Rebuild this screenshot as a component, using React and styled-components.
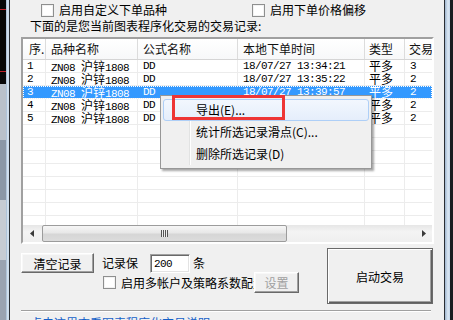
import React from 'react'
import styled, { createGlobalStyle } from 'styled-components'

const uiFont = `"Noto Sans CJK SC", "Liberation Sans", sans-serif`
const monoFont = `"Liberation Mono", "Noto Sans CJK SC", monospace`

const GlobalStyle = createGlobalStyle`
  html, body {
    margin: 0;
    padding: 0;
    background: #0b0b0b;
    overflow: hidden;
  }
  body {
    width: 453px;
    height: 320px;
    font-family: ${uiFont};
    font-size: 12px;
  }
`

const Page = styled.div`
  display: flex;
  width: 453px;
  height: 320px;
`

const LeftBackdrop = styled.div`
  width: 6px;
  background:
    linear-gradient(to bottom, transparent 0 9px, #c0202a 9px 10px, transparent 10px 71px, #c0202a 71px 72px, transparent 72px),
    linear-gradient(to bottom, #080808 0 84px, #b9c1cb 84px 140px, #8b97a6 140px 200px, #c6cbd3 200px 260px, #9aa3b1 260px);
`

const FrameEdge = styled.div`
  box-sizing: border-box;
  background: linear-gradient(to right, #9fb6cf, #dbe7f3 60%, #c4d6e9);
  border-left: ${({ $side }) => ($side === 'right' ? '1px solid #2a2e33' : 'none')};
  border-right: ${({ $side }) => ($side === 'left' ? '1px solid #2a2e33' : 'none')};
  width: ${({ $side }) => ($side === 'right' ? '6px' : '4px')};
`

const RightBackdrop = styled.div`
  width: 3px;
  background: #1a1c20;
`

const Dialog = styled.div`
  position: relative;
  width: 434px;
  box-sizing: border-box;
  padding: 0 10px 0 11px;
  background: #f0f0f0;
  overflow: hidden;
  color: #000;
  display: flex;
  flex-direction: column;
`

const CheckRow = styled.div`
  display: grid;
  grid-template-columns: 231px auto;
  height: 14px;
  margin-top: 3px;
  flex: none;
`

const CheckLabel = styled.label`
  display: flex;
  align-items: center;
  gap: 5px;
  padding-left: ${({ $indent }) => $indent || 0}px;
  line-height: 14px;
  white-space: nowrap;
`

const Box = styled.span`
  width: 13px;
  height: 13px;
  box-sizing: border-box;
  border: 1px solid #8e8f8f;
  background: #fff;
  box-shadow: inset 0 0 0 1px #f2f2f2;
  flex: none;
`

const Caption = styled.div`
  margin-top: 2px;
  height: 14px;
  line-height: 14px;
  padding-left: 9px;
  white-space: nowrap;
  flex: none;
`

const ListView = styled.div`
  margin-top: 4px;
  height: 207px;
  flex: none;
  box-sizing: border-box;
  border: 2px solid;
  border-color: #a0a0a0 #ffffff #ffffff #a0a0a0;
  background: #fff;
  display: flex;
  flex-direction: column;
  overflow: hidden;
`

const HeaderRow = styled.div`
  display: flex;
  height: 21px;
  flex: none;
  box-sizing: border-box;
  border-bottom: 1px solid #d5d5d5;
  background: linear-gradient(to bottom, #ffffff, #f7f8f9);
`

const HeaderCell = styled.div`
  flex: none;
  width: ${({ $w }) => $w}px;
  box-sizing: border-box;
  border-right: 1px solid #dcdcdc;
  padding-left: ${({ $pad }) => $pad}px;
  line-height: 20px;
  white-space: nowrap;
  overflow: hidden;
  color: #111;
`

const Body = styled.div`
  flex: 1;
  min-height: 0;
  overflow: hidden;
`

const Row = styled.div`
  display: flex;
  height: 13px;
  box-sizing: border-box;
  border-bottom: 1px solid #ececec;
  background: ${({ $selected }) => ($selected ? '#3399ff' : 'transparent')};
  color: ${({ $selected }) => ($selected ? '#fff' : '#000')};
  outline: ${({ $selected }) => ($selected ? '1px dotted #ffffff' : 'none')};
  outline-offset: -1px;
`

const Cell = styled.div`
  flex: none;
  width: ${({ $w }) => $w}px;
  height: 12px;
  box-sizing: border-box;
  border-right: 1px solid ${({ $selected }) => ($selected ? '#3399ff' : '#ececec')};
  padding-left: ${({ $pad }) => $pad}px;
  font-family: ${monoFont};
  font-size: 11px;
  letter-spacing: -0.6px;
  line-height: 12px;
  white-space: nowrap;
  overflow-x: clip;
  overflow-y: visible;
`

const Cjk = styled.span`
  font-family: ${uiFont};
  font-size: 12px;
  line-height: 12px;
  letter-spacing: 0;
`

const HScroll = styled.div`
  flex: none;
  height: 17px;
  display: flex;
  align-items: stretch;
  background: linear-gradient(to bottom, #e6e6e6, #f4f4f4 40%, #efefef);
`

const ArrowButton = styled.div`
  width: 17px;
  flex: none;
  display: flex;
  align-items: center;
  justify-content: center;
`

const Track = styled.div`
  flex: 1;
  padding: 0 1px;
  display: flex;
`

const Thumb = styled.div`
  width: 245px;
  margin-left: 1px;
  box-sizing: border-box;
  border: 1px solid #9c9c9c;
  border-radius: 2px;
  background: linear-gradient(to bottom, #f6f6f6, #e8e8e8 45%, #d6d6d6 55%, #dcdcdc);
  display: flex;
  align-items: center;
  justify-content: center;
`

const Grip = styled.div`
  width: 7px;
  height: 7px;
  background: repeating-linear-gradient(to right, #555 0 1px, #eee 1px 2px);
`

const Bottom = styled.div`
  display: flex;
  height: 64px;
  flex: none;
`

const Controls = styled.div`
  flex: 1;
  display: flex;
  flex-direction: column;
`

const ControlRow = styled.div`
  display: flex;
  align-items: center;
  flex: none;
  height: ${({ $h }) => $h}px;
  margin-top: ${({ $top }) => $top}px;
  padding-left: ${({ $indent }) => $indent || 0}px;
`

const Button = styled.button`
  width: ${({ $w }) => $w}px;
  height: ${({ $h }) => $h}px;
  padding: 0;
  box-sizing: border-box;
  font-family: ${uiFont};
  font-size: 12px;
  color: ${({ disabled }) => (disabled ? '#a0a0a0' : '#000')};
  background: #f0f0f0;
  border: 1px solid;
  border-color: #ffffff #696969 #696969 #ffffff;
  box-shadow: inset -1px -1px 0 #a0a0a0, inset 1px 1px 0 #f8f8f8;
  flex: none;
`

const StartButton = styled(Button)`
  margin-top: 4px;
  margin-right: 1px;
  border: 1px solid #6a6a6a;
  box-shadow:
    inset 1px 1px 0 #ffffff,
    inset -1px -1px 0 #5f5f5f,
    inset -2px -2px 0 #a0a0a0;
`

const Text = styled.span`
  margin-left: ${({ $left }) => $left || 0}px;
  white-space: nowrap;
  line-height: 14px;
`

const Field = styled.div`
  margin-left: 12px;
  width: 40px;
  height: 19px;
  box-sizing: border-box;
  border: 1px solid;
  border-color: #a0a0a0 #ffffff #ffffff #a0a0a0;
  box-shadow: inset 1px 1px 0 #696969, inset -1px -1px 0 #e3e3e3;
  background: #fff;
  padding-left: 3px;
  font-family: ${monoFont};
  font-size: 11px;
  letter-spacing: -0.6px;
  line-height: 18px;
`

const Clipped = styled.span`
  width: 133px;
  margin-left: 5px;
  overflow: hidden;
  white-space: nowrap;
  line-height: 14px;
`

const Rule = styled.div`
  width: 410px;
  height: 1px;
  margin-top: 2px;
  background: #a0a0a0;
  border-bottom: 1px solid #ffffff;
  flex: none;
`

const LinkText = styled.div`
  margin-top: 4px;
  padding-left: 9px;
  color: #1460c8;
  line-height: 14px;
  white-space: nowrap;
  flex: none;
`

const Menu = styled.div`
  position: absolute;
  left: 150px;
  top: 95px;
  width: 212px;
  box-sizing: border-box;
  padding: 3px 2px;
  background: #f0f0f0;
  border: 1px solid #979797;
  box-shadow: 2px 2px 2px rgba(0, 0, 0, 0.35);
  &::before {
    content: '';
    position: absolute;
    left: 28px;
    top: 3px;
    bottom: 3px;
    width: 1px;
    background: #e2e3e3;
    box-shadow: 1px 0 0 #ffffff;
  }
`

const MenuItem = styled.div`
  position: relative;
  height: 22px;
  box-sizing: border-box;
  padding-left: 32px;
  line-height: 20px;
  white-space: nowrap;
  border: 1px solid ${({ $active }) => ($active ? '#aecff7' : 'transparent')};
  border-radius: 3px;
  background: ${({ $active }) =>
    $active ? 'linear-gradient(to bottom, #f2f7fe, #e5eefb)' : 'transparent'};
`

const Mark = styled.div`
  position: absolute;
  left: 162px;
  top: 95px;
  width: 113px;
  height: 25px;
  box-sizing: border-box;
  border: 3px solid #ee3535;
`

const columns = [
  { w: 23, label: '序.', head: 6, pad: 4 },
  { w: 92, label: '品种名称', head: 5, pad: 5 },
  { w: 100, label: '公式名称', head: 5, pad: 5 },
  { w: 127, label: '本地下单时间', head: 5, pad: 5 },
  { w: 40, label: '类型', head: 4, pad: 4 },
  { w: 80, label: '交易', head: 4, pad: 5 },
]

const records = [
  ['1', '18/07/27 13:34:21', '3'],
  ['2', '18/07/27 13:35:22', '2'],
  ['3', '18/07/27 13:39:57', '2'],
  ['4', '18/07/27 13:41:06', '2'],
  ['5', '18/07/27 13:42:18', '2'],
]

function LeftArrow() {
  return (
    <svg width="4" height="7" viewBox="0 0 4 7">
      <path d="M4 0 L0 3.5 L4 7 Z" fill="#3a3a3a" />
    </svg>
  )
}

function RightArrow() {
  return (
    <svg width="4" height="7" viewBox="0 0 4 7">
      <path d="M0 0 L4 3.5 L0 7 Z" fill="#3a3a3a" />
    </svg>
  )
}

function RecordRow({ rec, selected }) {
  const [no, time, qty] = rec
  const cells = [
    no,
    <>ZN08 <Cjk>沪锌</Cjk>1808</>,
    'DD',
    time,
    <Cjk>平多</Cjk>,
    qty,
  ]
  return (
    <Row $selected={selected}>
      {cells.map((c, i) => (
        <Cell key={i} $w={columns[i].w} $pad={columns[i].pad} $selected={selected}>
          {c}
        </Cell>
      ))}
    </Row>
  )
}

export default function App() {
  const blanks = Array.from({ length: 9 })
  return (
    <>
      <GlobalStyle />
      <Page>
        <LeftBackdrop />
        <FrameEdge $side="left" />
        <Dialog>
          <CheckRow>
            <CheckLabel $indent={20}>
              <Box />
              启用自定义下单品种
            </CheckLabel>
            <CheckLabel>
              <Box />
              启用下单价格偏移
            </CheckLabel>
          </CheckRow>
          <Caption>下面的是您当前图表程序化交易的交易记录:</Caption>

          <ListView>
            <HeaderRow>
              {columns.map((c) => (
                <HeaderCell key={c.label} $w={c.w} $pad={c.head}>
                  {c.label}
                </HeaderCell>
              ))}
            </HeaderRow>
            <Body>
              {records.map((r, i) => (
                <RecordRow key={r[0]} rec={r} selected={i === 2} />
              ))}
              {blanks.map((_, i) => (
                <Row key={'b' + i}>
                  {columns.map((c) => (
                    <Cell key={c.label} $w={c.w} $pad={c.pad} />
                  ))}
                </Row>
              ))}
            </Body>
            <HScroll>
              <ArrowButton>
                <LeftArrow />
              </ArrowButton>
              <Track>
                <Thumb>
                  <Grip />
                </Thumb>
              </Track>
              <ArrowButton>
                <RightArrow />
              </ArrowButton>
            </HScroll>
          </ListView>

          <Bottom>
            <Controls>
              <ControlRow $h={20} $top={9}>
                <Button $w={73} $h={20}>清空记录</Button>
                <Text $left={8}>记录保</Text>
                <Field>200</Field>
                <Text $left={3}>条</Text>
              </ControlRow>
              <ControlRow $h={21} $top={-1} $indent={82}>
                <Box />
                <Clipped>启用多帐户及策略系数配置</Clipped>
                <Button $w={45} $h={21} disabled>
                  设置
                </Button>
              </ControlRow>
            </Controls>
            <StartButton $w={106} $h={56}>
              启动交易
            </StartButton>
          </Bottom>
          <Rule />
          <LinkText>点击这里查看图表程序化交易说明</LinkText>

          <Menu>
            <MenuItem $active>导出(E)...</MenuItem>
            <MenuItem>统计所选记录滑点(C)...</MenuItem>
            <MenuItem>删除所选记录(D)</MenuItem>
          </Menu>
          <Mark />
        </Dialog>
        <FrameEdge $side="right" />
        <RightBackdrop />
      </Page>
    </>
  )
}
